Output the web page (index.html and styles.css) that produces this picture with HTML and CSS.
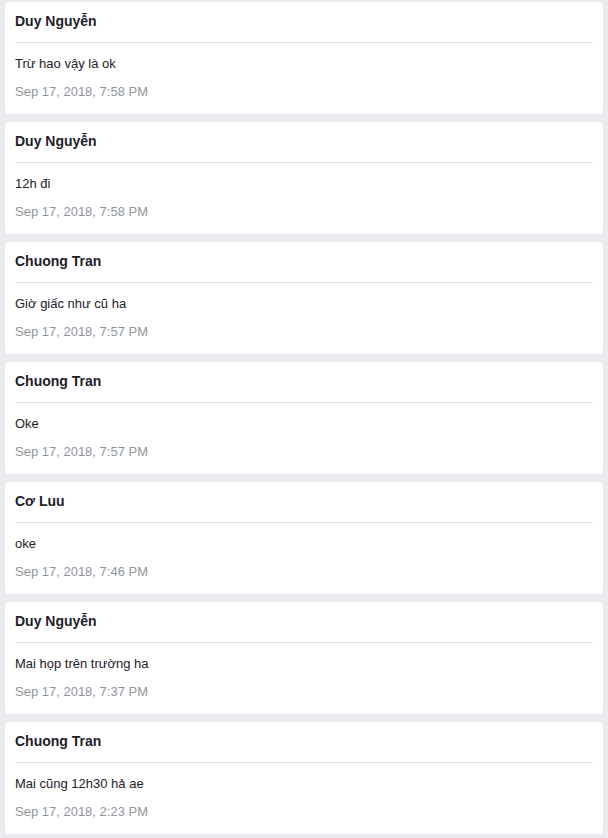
FILE: index.html
```html
<!DOCTYPE html>
<html lang="vi">
<head>
<meta charset="utf-8">
<title>Comments</title>
<link rel="stylesheet" href="styles.css">
</head>
<body>
<main class="feed">
  <article class="card">
    <header class="card-head"><span class="author">Duy Nguyễn</span></header>
    <p class="msg">Trừ hao vậy là ok</p>
    <time class="date">Sep 17, 2018, 7:58 PM</time>
  </article>
  <article class="card">
    <header class="card-head"><span class="author">Duy Nguyễn</span></header>
    <p class="msg">12h đi</p>
    <time class="date">Sep 17, 2018, 7:58 PM</time>
  </article>
  <article class="card">
    <header class="card-head"><span class="author">Chuong Tran</span></header>
    <p class="msg">Giờ giấc như cũ ha</p>
    <time class="date">Sep 17, 2018, 7:57 PM</time>
  </article>
  <article class="card">
    <header class="card-head"><span class="author">Chuong Tran</span></header>
    <p class="msg">Oke</p>
    <time class="date">Sep 17, 2018, 7:57 PM</time>
  </article>
  <article class="card">
    <header class="card-head"><span class="author">Cơ Luu</span></header>
    <p class="msg">oke</p>
    <time class="date">Sep 17, 2018, 7:46 PM</time>
  </article>
  <article class="card">
    <header class="card-head"><span class="author">Duy Nguyễn</span></header>
    <p class="msg">Mai họp trên trường ha</p>
    <time class="date">Sep 17, 2018, 7:37 PM</time>
  </article>
  <article class="card">
    <header class="card-head"><span class="author">Chuong Tran</span></header>
    <p class="msg">Mai cũng 12h30 hả ae</p>
    <time class="date">Sep 17, 2018, 2:23 PM</time>
  </article>
</main>
</body>
</html>
```
FILE: styles.css
```css
html, body {
  margin: 0;
  padding: 0;
  background: #e9ebee;
}
body {
  font-family: "Liberation Sans", Arial, sans-serif;
  color: #1d2129;
}
.feed {
  display: flex;
  flex-direction: column;
  gap: 8px;
  padding: 2px 5px;
}
.card {
  display: flex;
  flex-direction: column;
  height: 112px;
  box-sizing: border-box;
  padding: 0 10px;
  background: #ffffff;
  border-radius: 4px;
}
.card-head {
  height: 40px;
  line-height: 38px;
  border-bottom: 1px solid #dddfe2;
}
.author {
  font-size: 14px;
  font-weight: bold;
  color: #1d2129;
}
.msg {
  margin: 13px 0 0;
  font-size: 13px;
  line-height: 16px;
  color: #1d2129;
}
.date {
  display: block;
  margin-top: 12px;
  font-size: 13px;
  line-height: 16px;
  color: #90949c;
}
```
